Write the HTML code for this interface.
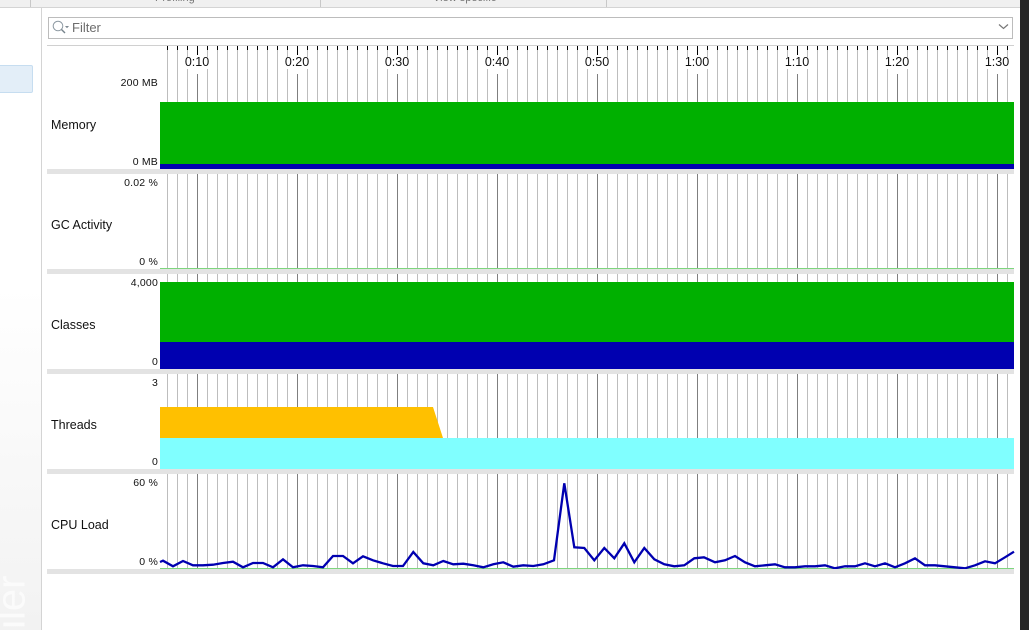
<!DOCTYPE html>
<html><head><meta charset="utf-8"><style>
html,body{margin:0;padding:0;width:1029px;height:630px;overflow:hidden;background:#fff}
body{position:relative;font-family:"Liberation Sans",sans-serif;color:#111}
div{position:absolute}
.grid{left:167px;width:847px;background-image:linear-gradient(to right,#7f7f7f 1px,transparent 1px),linear-gradient(to right,#bdbdbd 1px,transparent 1px);background-size:100px 100%,10px 100%;background-position:30px 0,0 0;background-repeat:repeat-x}
.sep{left:47px;width:967px;height:5px;background:#e3e3e3}
.name{left:51px;font-size:12.5px;line-height:16px;white-space:nowrap}
.val{right:871px;font-size:10.5px;line-height:12px;white-space:nowrap;letter-spacing:.2px;margin-top:1px}
.t{width:60px;text-align:center;top:55px;font-size:12.5px;line-height:15px}
</style></head><body>
<div style="left:0;top:0;width:1020px;height:7px;background:#f0f0f0"></div>
<div style="left:0;top:7px;width:1020px;height:1px;background:#d4d4d4"></div>
<div style="left:30px;top:0;width:1px;height:7px;background:#c8c8c8"></div>
<div style="left:320px;top:0;width:1px;height:7px;background:#c8c8c8"></div>
<div style="left:606px;top:0;width:1px;height:7px;background:#c8c8c8"></div>
<div style="left:155px;top:-8px;font-size:11px;line-height:13px;color:#777">Profiling</div>
<div style="left:433px;top:-8px;font-size:11px;line-height:13px;color:#777">View specific</div>
<div style="left:1020px;top:0;width:9px;height:630px;background:#252525"></div>
<div style="left:0;top:8px;width:41px;height:622px;overflow:hidden;background:linear-gradient(#fff 45%,#f2f2f2)">
<div style="left:-16.5px;top:574.5px;width:55px;height:40px;font-size:40px;line-height:40px;color:#fbfbfb;transform:rotate(-90deg);text-align:right;white-space:nowrap;overflow:hidden">iler</div>
</div>
<div style="left:41px;top:8px;width:1px;height:622px;background:#d4d4d4"></div>
<div style="left:-3px;top:65px;width:34px;height:26px;background:#e3eef8;border:1px solid #c6ddf0;border-radius:2px"></div>

<div style="left:48px;top:17px;width:963px;height:20px;border:1px solid #bcbcbc;background:#fff"></div>
<svg style="position:absolute;left:50px;top:18px" width="22" height="20" viewBox="0 0 22 20"><circle cx="8" cy="8" r="4.8" fill="none" stroke="#8e9aa3" stroke-width="1"/><path d="M11.5 11.5L15 15" stroke="#77838c" stroke-width="1.4" fill="none"/><path d="M15 8h4l-2 2.2z" fill="#7f8a92"/></svg>
<div style="left:72px;top:20px;font-size:13px;line-height:16px;color:#6d6d6d">Filter</div>
<svg style="position:absolute;left:998px;top:23px" width="12" height="8" viewBox="0 0 12 8"><path d="M1 1.5L5.5 5.5L10 1.5" fill="none" stroke="#777" stroke-width="1.2"/></svg>
<div style="left:47px;top:45px;width:967px;height:1px;background:#d0d0d0"></div>

<!-- header -->
<div class="grid" style="top:46px;height:4px;background-image:linear-gradient(to right,#000 1px,transparent 1px);background-size:10px 100%;background-position:0 0"></div>
<div class="grid" style="top:50px;height:52px;background-image:linear-gradient(to right,#bdbdbd 1px,transparent 1px);background-size:10px 100%;background-position:0 0"></div>
<div class="grid" style="top:50px;height:5px;background-image:linear-gradient(to right,#000 1px,transparent 1px);background-size:100px 100%;background-position:30px 0"></div>
<div style="left:160px;top:55px;width:854px;height:19px;background-image:linear-gradient(to right,#fff 1px,transparent 1px);background-size:100px 100%;background-position:37px 0;background-repeat:repeat-x"></div>
<div class="grid" style="top:74px;height:28px;background-image:linear-gradient(to right,#7f7f7f 1px,transparent 1px);background-size:100px 100%;background-position:30px 0"></div>
<div style="left:160px;top:57px;width:854px;height:12px;background-image:linear-gradient(to right,#fff 24px,transparent 24px);background-size:100px 100%;background-position:25px 0;background-repeat:repeat-x"></div>
<div class="t" style="left:167px">0:10</div>
<div class="t" style="left:267px">0:20</div>
<div class="t" style="left:367px">0:30</div>
<div class="t" style="left:467px">0:40</div>
<div class="t" style="left:567px">0:50</div>
<div class="t" style="left:667px">1:00</div>
<div class="t" style="left:767px">1:10</div>
<div class="t" style="left:867px">1:20</div>
<div class="t" style="left:967px">1:30</div>

<!-- Memory -->
<div style="left:160px;top:102px;width:854px;height:62px;background:#00b000"></div>
<div style="left:160px;top:164px;width:854px;height:5px;background:#0000b0"></div>
<div class="sep" style="top:169px"></div>
<div class="name" style="top:117px">Memory</div>
<div class="val" style="top:76px">200 MB</div>
<div class="val" style="top:155px">0 MB</div>

<!-- GC -->
<div class="grid" style="top:174px;height:95px"></div>
<div style="left:160px;top:268px;width:854px;height:1px;background:#7ed67e"></div>
<div class="sep" style="top:269px"></div>
<div class="name" style="top:217px">GC Activity</div>
<div class="val" style="top:176px">0.02 %</div>
<div class="val" style="top:255px">0 %</div>

<!-- Classes -->
<div class="grid" style="top:274px;height:8px"></div>
<div style="left:160px;top:282px;width:854px;height:60px;background:#00b000"></div>
<div style="left:160px;top:342px;width:854px;height:27px;background:#0000b0"></div>
<div class="sep" style="top:369px"></div>
<div class="name" style="top:317px">Classes</div>
<div class="val" style="top:276px">4,000</div>
<div class="val" style="top:355px">0</div>

<!-- Threads -->
<div class="grid" style="top:374px;height:64px"></div>
<svg style="position:absolute;left:160px;top:407px" width="290" height="31" viewBox="0 0 290 31"><path d="M0 0H273L283 31H0z" fill="#ffc000"/></svg>
<div style="left:160px;top:438px;width:854px;height:31px;background:#80ffff"></div>
<div class="sep" style="top:469px"></div>
<div class="name" style="top:417px">Threads</div>
<div class="val" style="top:376px">3</div>
<div class="val" style="top:455px">0</div>

<!-- CPU -->
<div class="grid" style="top:474px;height:95px"></div>
<div style="left:160px;top:568px;width:854px;height:1px;background:#7ed67e"></div>
<svg style="position:absolute;left:0;top:470px" width="1029" height="110" viewBox="0 470 1029 110"><polyline fill="none" stroke="#0000b0" stroke-width="2.3" stroke-linejoin="miter" points="160,562 163,560.7 173,566.3 183,561 193,565.3 203,565.3 213,564.7 223,563 233,561.7 243,567.3 253,563 263,563 273,567.3 283,559.3 293,567.3 303,565.3 313,566 323,567.3 333,556 343,556 353,563.3 363,556.3 373,560.3 383,563.3 393,566 403,566 413.3,552 423.3,563.3 433.3,565.3 443.3,561 453.3,564.3 463.3,563.7 473.3,565.3 483.3,567.3 493.3,564.3 503.3,562.3 513.3,566.7 523.3,565.3 533.3,566 543.3,564.3 554,560.3 564.3,483.3 574.3,547.3 584.3,548 594.3,560.3 604.3,548 614.3,558.3 624.3,543.3 634.3,562.3 644.3,548 654.3,559.3 664.3,564.3 674.3,566.3 684.3,565.3 694.3,558.3 704,557.3 715,562.3 725,560.3 735,556 745,562.3 755,566.3 765,565.3 775,564.3 785,567.3 795,567.3 805,566.3 815,566.3 825,565.3 835,568.3 845,566.3 855,566.3 865,563.3 875,566.3 885,563.3 895,567.3 905,563.3 915,558.3 925,565.3 935,565.3 945,566.3 955,567.3 965,568.3 975,565.3 985,561.3 995,563.3 1005,557.3 1014,551.7"/></svg>
<div class="sep" style="top:569px"></div>
<div class="name" style="top:517px">CPU Load</div>
<div class="val" style="top:476px">60 %</div>
<div class="val" style="top:555px">0 %</div>
</body></html>
